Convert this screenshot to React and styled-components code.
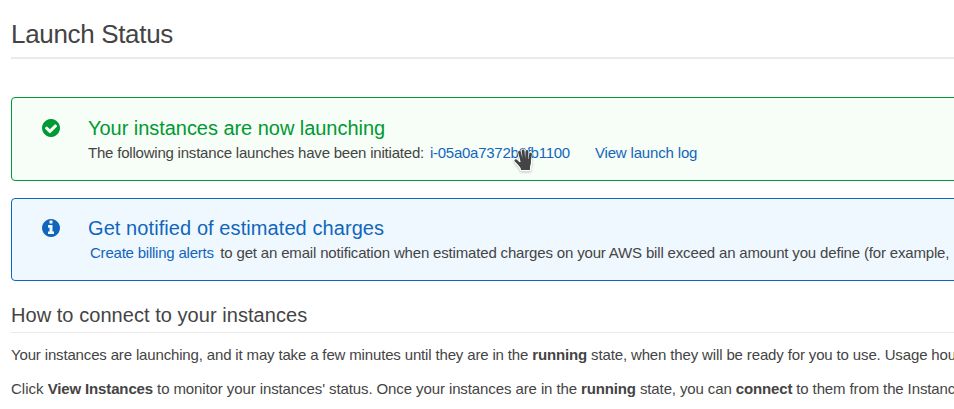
import React from 'react';
import styled, { createGlobalStyle } from 'styled-components';

const GlobalStyle = createGlobalStyle`
  * { box-sizing: border-box; }
  body {
    margin: 0;
    background: #fff;
    color: #444;
    font: 15px/20px "Liberation Sans", Arial, sans-serif;
    overflow: hidden;
  }
`;

const Page = styled.main`
  height: 409px;
  padding-left: 11px;
  overflow: hidden;
  white-space: nowrap;
`;

const Title = styled.h1`
  margin: 0 0 38px;
  padding-top: 19px;
  height: 59px;
  border-bottom: 2px solid #eaeaea;
  font-size: 26px;
  line-height: 30px;
  font-weight: 400;
  letter-spacing: -0.33px;
`;

const Notice = styled.section`
  display: flex;
  width: 1200px;
  height: ${(p) => p.$height}px;
  margin-bottom: 17px;
  padding: ${(p) => p.$top}px 0 0 30px;
  border: 1px solid ${(p) => p.$color};
  border-radius: 4px;
  background: ${(p) => p.$background};
`;

const NoticeIcon = styled.svg`
  flex: none;
  width: 18px;
  height: 18px;
  margin: 2px 28px 0 0;
  fill: ${(p) => p.$color};
`;

const NoticeTitle = styled.h2`
  margin: 0 0 4px;
  font-size: 20px;
  line-height: 22px;
  font-weight: 400;
  letter-spacing: ${(p) => p.$tracking}px;
  color: ${(p) => p.$color};
`;

const NoticeText = styled.p`
  display: flex;
  margin: 0;
  line-height: 20px;
`;

const Run = styled.span`
  letter-spacing: ${(p) => p.$tracking}px;
`;

const Strong = styled.b`
  letter-spacing: -0.14px;
`;

const Link = styled.a`
  position: relative;
  margin-left: ${(p) => p.$left || 0}px;
  margin-right: ${(p) => p.$right || 0}px;
  color: #1166bb;
  letter-spacing: ${(p) => p.$tracking}px;
`;

const HandCursor = styled.svg`
  position: absolute;
  left: 82px;
  top: 4px;
  width: 24px;
  height: 26px;
  filter: drop-shadow(0 1px 1px rgba(0, 0, 0, 0.25));
`;

const SectionTitle = styled.h2`
  margin: 0 0 12px;
  height: 35px;
  padding-top: 6px;
  border-bottom: 1px solid #eaeaea;
  font-size: 20px;
  line-height: 22px;
  font-weight: 400;
  letter-spacing: 0.05px;
`;

const Paragraph = styled.p`
  margin: 0 0 14px;
`;

const CheckIcon = () => (
  <NoticeIcon $color="#009933" viewBox="128 128 1536 1536" aria-hidden="true">
    <path d="M1412 734q0-28-18-46l-91-90q-19-19-45-19t-45 19l-408 407-226-226q-19-19-45-19t-45 19l-91 90q-18 18-18 46 0 27 18 45l362 362q19 19 45 19 27 0 46-19l543-543q18-18 18-45zm252 162q0 209-103 385.5t-279.5 279.5-385.5 103-385.5-103-279.5-279.5-103-385.5 103-385.5 279.5-279.5 385.5-103 385.5 103 279.5 279.5 103 385.5z" />
  </NoticeIcon>
);

const InfoIcon = () => (
  <NoticeIcon $color="#1166bb" viewBox="128 128 1536 1536" aria-hidden="true">
    <path d="M1152 1376v-160q0-14-9-23t-23-9h-96v-512q0-14-9-23t-23-9h-320q-14 0-23 9t-9 23v160q0 14 9 23t23 9h96v320h-96q-14 0-23 9t-9 23v160q0 14 9 23t23 9h448q14 0 23-9t9-23zm-128-896v-192q0-14-9-23t-23-9h-192q-14 0-23 9t-9 23v192q0 14 9 23t23 9h192q14 0 23-9t9-23zm640 416q0 209-103 385.5t-279.5 279.5-385.5 103-385.5-103-279.5-279.5-103-385.5 103-385.5 279.5-279.5 385.5-103 385.5 103 279.5 279.5 103 385.5z" />
  </NoticeIcon>
);

const fingers = 'M7.4 5.2 L9.6 13 M11.1 3.8 L12 13 M15 4.3 L14.5 13 M18.6 7 L17.4 14 M3.8 13.6 L8.6 18';
const palm = 'M8.4 12 L18.4 12 L19 16 L18 19.5 L18 23 L9 23 L8.6 21 L4.4 15.4 L8.6 15 Z';

export default function App() {
  return (
    <>
      <GlobalStyle />
      <Page>
        <Title>Launch Status</Title>
        <Notice $height={84} $top={19} $color="#009933" $background="#f7fef7">
          <CheckIcon />
          <div>
            <NoticeTitle $color="#009933" $tracking={-0.04}>Your instances are now launching</NoticeTitle>
            <NoticeText>
              <Run $tracking={-0.21}>The following instance launches have been initiated:</Run>
              <Link $left={6} $tracking={-0.26}>
                i-05a0a7372b6fb1100
                <HandCursor viewBox="0 0 24 26" fill="none" strokeLinecap="round" strokeLinejoin="round" aria-hidden="true">
                  <path d={fingers} stroke="#fff" strokeWidth="4.4" strokeOpacity="0.75" />
                  <path d={palm} stroke="#fff" strokeWidth="2.6" />
                  <path d={fingers} stroke="#444" strokeWidth="2.7" />
                  <path d={palm} fill="#444" />
                </HandCursor>
              </Link>
              <Link $left={25} $tracking={-0.16}>View launch log</Link>
            </NoticeText>
          </div>
        </Notice>
        <Notice $height={83} $top={18} $color="#1166bb" $background="#f0f8ff">
          <InfoIcon />
          <div>
            <NoticeTitle $color="#1166bb" $tracking={0.08}>Get notified of estimated charges</NoticeTitle>
            <NoticeText>
              <Link $left={2} $right={6.5} $tracking={-0.22}>Create billing alerts</Link>
              <Run $tracking={-0.167}>to get an email notification when estimated charges on your AWS bill exceed an amount you define (for example,</Run>
            </NoticeText>
          </div>
        </Notice>
        <SectionTitle>How to connect to your instances</SectionTitle>
        <Paragraph>
          <Run $tracking={-0.155}>Your instances are launching, and it may take a few minutes until they are in the </Run>
          <Strong>running</Strong>
          <Run $tracking={-0.14}> state, when they will be ready for you to use. Usage hours</Run>
        </Paragraph>
        <Paragraph>
          <Run $tracking={0}>Click </Run>
          <Strong>View Instances</Strong>
          <Run $tracking={-0.1}> to monitor your instances' status. Once your instances are in the </Run>
          <Strong>running</Strong>
          <Run $tracking={-0.12}> state, you can </Run>
          <Strong>connect</Strong>
          <Run $tracking={-0.12}> to them from the Instances</Run>
        </Paragraph>
      </Page>
    </>
  );
}
